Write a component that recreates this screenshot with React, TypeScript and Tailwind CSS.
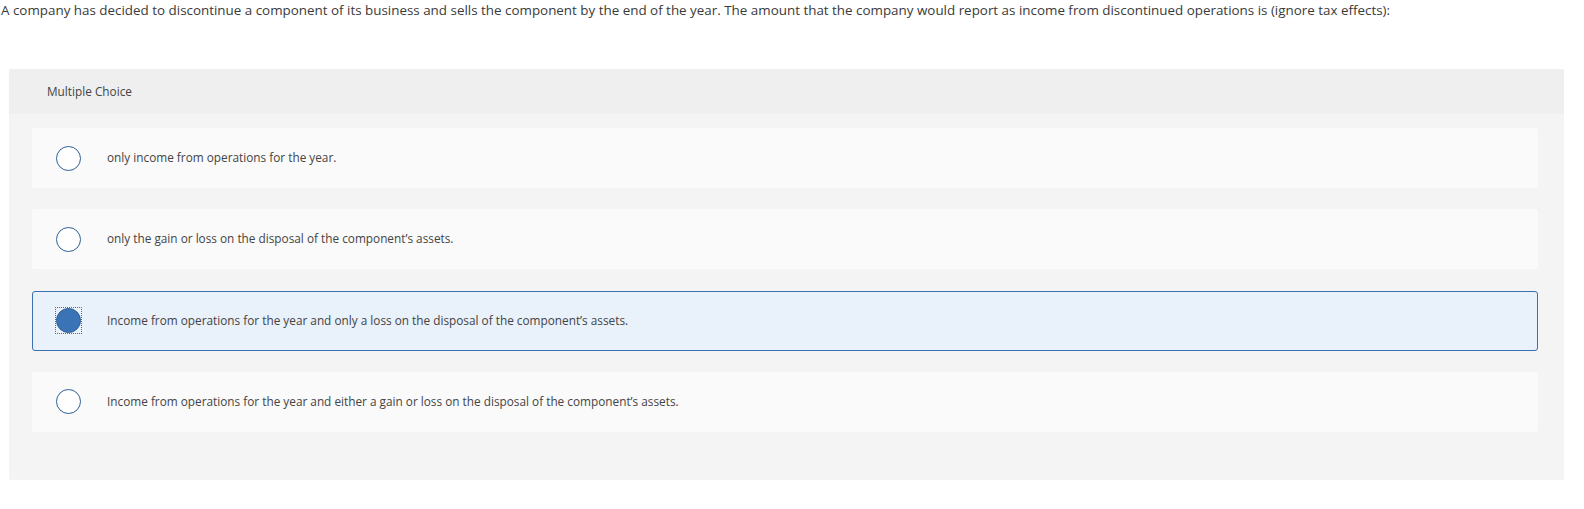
import React from 'react';

const options = [
  'only income from operations for the year.',
  "only the gain or loss on the disposal of the component’s assets.",
  "Income from operations for the year and only a loss on the disposal of the component’s assets.",
  "Income from operations for the year and either a gain or loss on the disposal of the component’s assets.",
];

// Pregunta de opción múltiple con la tercera respuesta seleccionada
export default function App() {
  const selected = 2;

  return (
    <div className="w-[1584px] h-[509px] bg-white font-['Open_Sans',sans-serif] text-[#333333]">
      <p className="pt-[1px] pl-[1px] text-[13.4px] leading-[19px] text-[#3a3a3a]">
        A company has decided to discontinue a component of its business and sells the component by the end of the year. The amount that the company would report as income from discontinued operations is (ignore tax effects):
      </p>

      <div className="mt-[49px] ml-[9px] w-[1555px] h-[411px] rounded-[2px] bg-[#f4f4f4]">
        <div className="h-[45px] flex items-center pl-[38px] bg-[#efefef] rounded-t-[2px] text-[11.8px] text-[#444444]">
          Multiple Choice
        </div>

        <div className="flex flex-col gap-[21.3px] pt-[14px] pl-[23px] pr-[26px]">
          {options.map((text, i) => {
            const isSel = i === selected;
            return (
              <div
                key={i}
                className={
                  isSel
                    ? 'h-[60px] flex items-center rounded-[3px] border border-[#3b70b1] bg-[#e9f1fb]'
                    : 'h-[60px] flex items-center rounded-[3px] border border-transparent bg-[#fafafa]'
                }
              >
                <div className="ml-[22px] w-[27px] h-[27px] flex items-center justify-center">
                  {isSel ? (
                    <div className="w-[27px] h-[27px] flex items-center justify-center border border-dotted border-[#3b70b1]">
                      <div className="w-[25px] h-[25px] rounded-full bg-[#3a74b6] border border-[#2f5f97]" />
                    </div>
                  ) : (
                    <div className="w-[25px] h-[25px] rounded-full bg-white border-[1.5px] border-[#2f5f97]" />
                  )}
                </div>
                <span className="ml-[25px] text-[11.8px] text-[#444444]">{text}</span>
              </div>
            );
          })}
        </div>
      </div>
    </div>
  );
}
